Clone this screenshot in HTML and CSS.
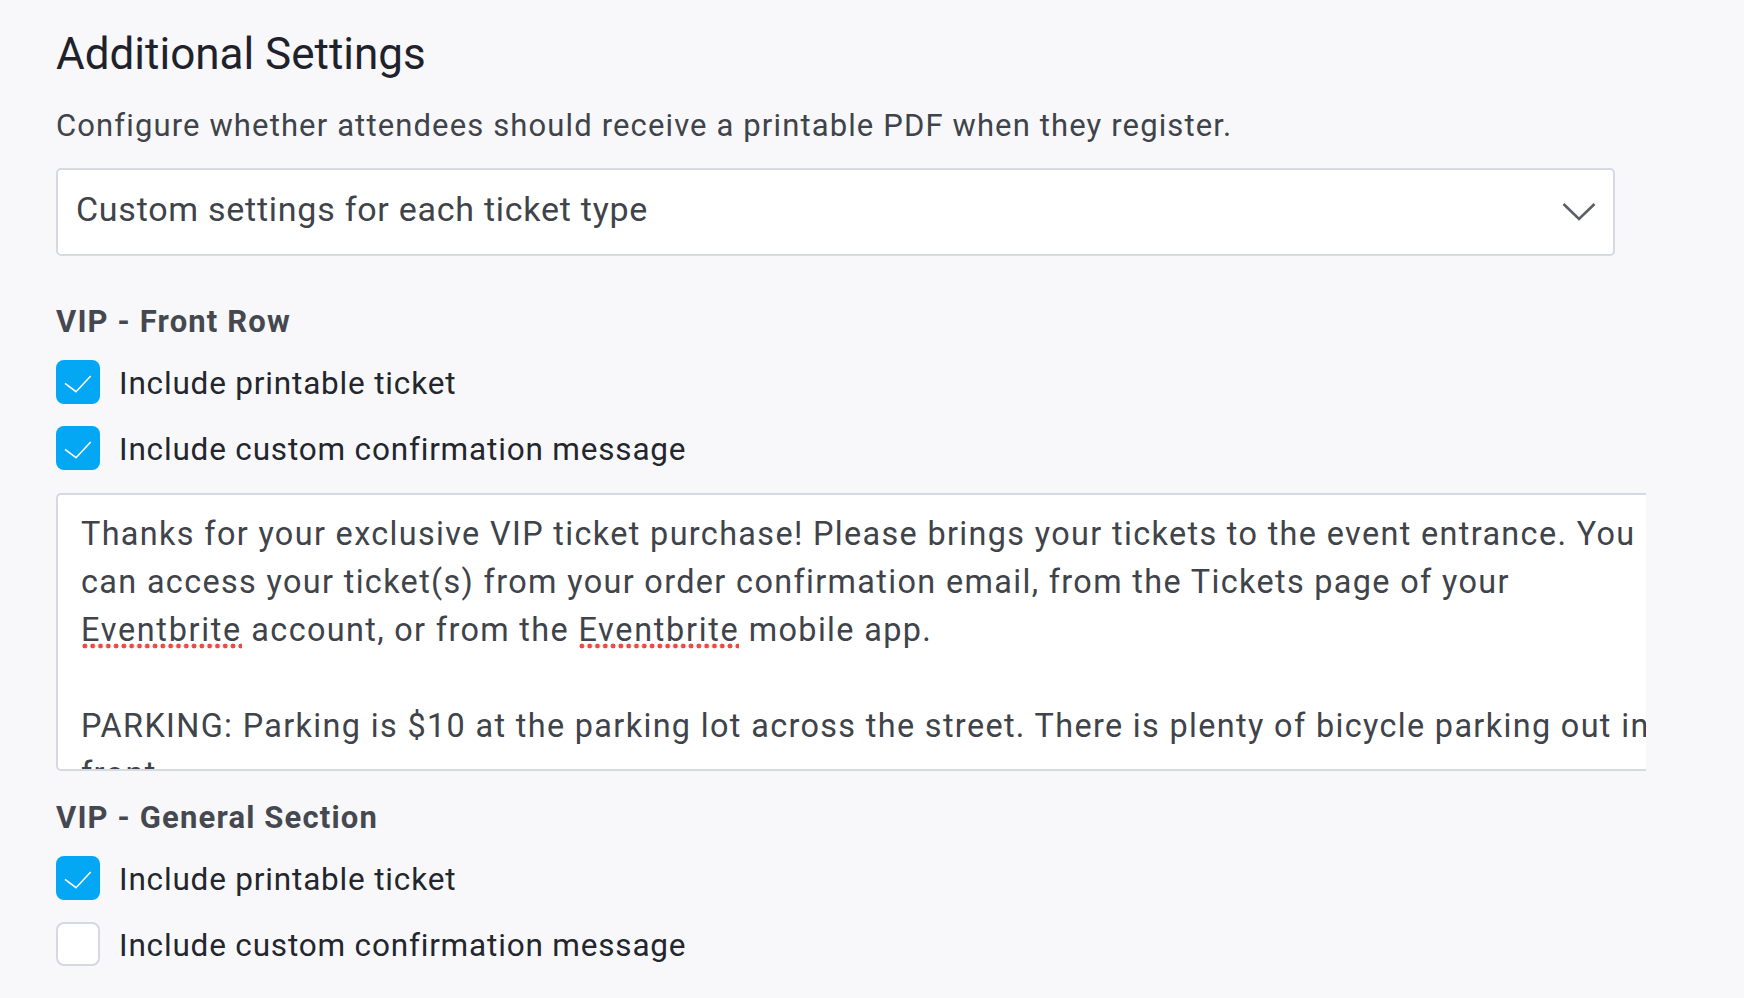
FILE: index.html
```html
<!DOCTYPE html>
<html lang="en">
<head>
<meta charset="utf-8">
<title>Additional Settings</title>
<link rel="stylesheet" href="styles.css">
</head>
<body>
<main class="page">
  <h1 class="title">Additional Settings</h1>
  <p class="desc">Configure whether attendees should receive a printable PDF when they register.</p>
  <div class="select">
    <span class="select-value">Custom settings for each ticket type</span>
    <svg class="chevron" width="34" height="19" viewBox="0 0 34 19" aria-hidden="true"><polyline points="1.5,2 17,17 32.5,2" fill="none" stroke="#5b5f67" stroke-width="2.6"/></svg>
  </div>

  <section class="ticket ticket-first">
    <h2 class="ticket-name">VIP - Front Row</h2>
    <div class="check">
      <span class="box box-on"><svg width="44" height="44" viewBox="0 0 44 44" aria-hidden="true"><polyline points="9,23.3 20,31.7 34.7,16" fill="none" stroke="#fff" stroke-width="1.6"/></svg></span>
      <span class="check-label">Include printable ticket</span>
    </div>
    <div class="check check-next">
      <span class="box box-on"><svg width="44" height="44" viewBox="0 0 44 44" aria-hidden="true"><polyline points="9,23.3 20,31.7 34.7,16" fill="none" stroke="#fff" stroke-width="1.6"/></svg></span>
      <span class="check-label">Include custom confirmation message</span>
    </div>
    <div class="message">
<div class="message-text">Thanks for your exclusive VIP ticket purchase! Please brings your tickets to the event entrance. You
can access your ticket(s) from your order confirmation email, from the Tickets page of your
<span class="misspelled">Eventbrite</span> account, or from the <span class="misspelled">Eventbrite</span> mobile app.

PARKING: Parking is $10 at the parking lot across the street. There is plenty of bicycle parking out in
front.</div>
    </div>
  </section>

  <section class="ticket ticket-second">
    <h2 class="ticket-name">VIP - General Section</h2>
    <div class="check">
      <span class="box box-on"><svg width="44" height="44" viewBox="0 0 44 44" aria-hidden="true"><polyline points="9,23.3 20,31.7 34.7,16" fill="none" stroke="#fff" stroke-width="1.6"/></svg></span>
      <span class="check-label">Include printable ticket</span>
    </div>
    <div class="check check-next">
      <span class="box box-off"></span>
      <span class="check-label">Include custom confirmation message</span>
    </div>
  </section>
</main>
</body>
</html>
```
FILE: styles.css
```css
* { box-sizing: border-box; }

html, body {
  margin: 0;
  padding: 0;
  background: #f8f8fa;
}

body {
  font-family: Roboto, "Liberation Sans", Arial, sans-serif;
  color: #3f434a;
  height: 998px;
  overflow: hidden;
}

.page {
  width: 1646px;
  padding: 26px 0 0 56px;
  overflow: hidden;
}

.title {
  margin: 0;
  font-size: 44px;
  line-height: 56px;
  font-weight: 400;
  color: #1f222a;
  letter-spacing: 0;
}

.desc {
  margin: 24px 0 0;
  font-size: 31px;
  line-height: 40px;
  letter-spacing: 1.13px;
  color: #3f434a;
}

.select {
  margin-top: 22px;
  width: 1559px;
  height: 88px;
  display: flex;
  align-items: center;
  justify-content: space-between;
  padding: 0 17px 0 18px;
  background: #ffffff;
  border: 2px solid #d6d9e0;
  border-radius: 5px;
}

.select-value {
  font-size: 34px;
  line-height: 40px;
  letter-spacing: 0.74px;
  color: #3f434a;
  padding-bottom: 6px;
}

.chevron {
  display: block;
  margin-top: -1px;
}

.ticket-name {
  margin: 0;
  font-size: 31px;
  line-height: 40px;
  font-weight: 700;
  letter-spacing: 1.15px;
  color: #45494f;
}

.ticket-first .ticket-name { margin-top: 46px; }
.ticket-second .ticket-name { margin-top: 27px; }

.check {
  display: flex;
  align-items: flex-start;
  gap: 19px;
  height: 44px;
  margin-top: 18px;
}

.check-next { margin-top: 22px; }

.box {
  flex: 0 0 44px;
  width: 44px;
  height: 44px;
  border-radius: 8px;
  display: block;
}

.box svg { display: block; }

.box-on { background: #03a7f3; }

.box-off {
  background: #ffffff;
  border: 2px solid #d6d9e0;
}

.check-label {
  font-size: 31.5px;
  line-height: 47px;
  letter-spacing: 0.82px;
  color: #23262d;
  white-space: nowrap;
}

.message {
  margin-top: 23px;
  width: calc(100% + 60px);
  height: 278px;
  background: #ffffff;
  border: 2px solid #d6d9e0;
  border-radius: 5px;
  padding: 15px 0 0 23px;
  overflow: hidden;
}

.message-text {
  font-size: 32.4px;
  line-height: 48px;
  letter-spacing: 1.35px;
  color: #3f434a;
  white-space: pre;
}

.misspelled {
  letter-spacing: 1.7px;
  background-image: radial-gradient(circle, #ee4a42 2.2px, rgba(238, 74, 66, 0) 2.7px);
  background-repeat: repeat-x;
  background-size: 7.8px 6px;
  background-position: 0 100%;
}
```
